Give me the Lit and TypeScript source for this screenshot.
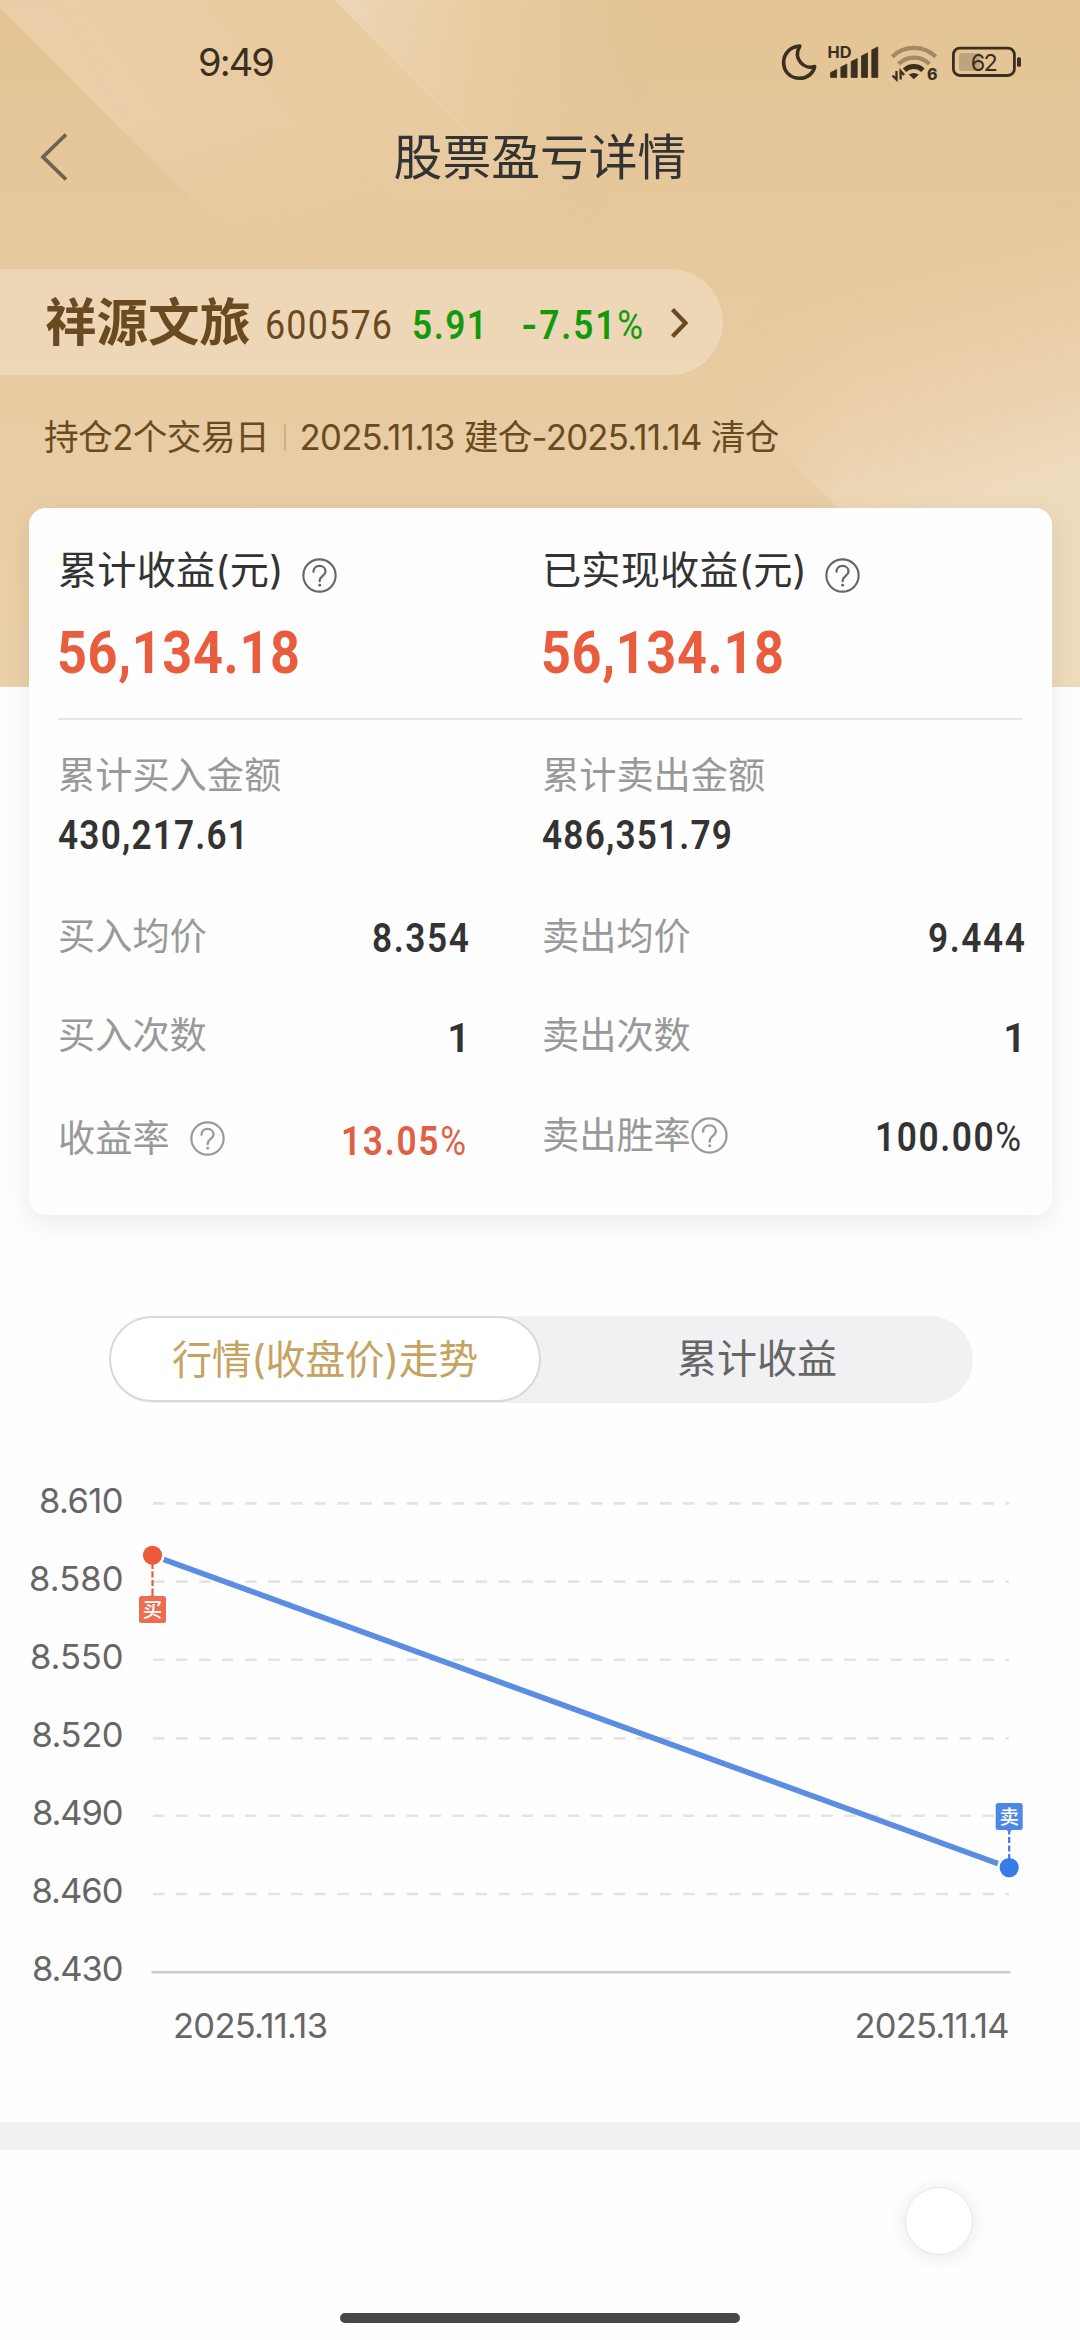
import { LitElement, html, svg, css } from "lit";
import { customElement, property } from "lit/decorators.js";

/* Condensed, slightly spaced figure that fills `w` pixels. */
@customElement("fit-num")
class FitNum extends LitElement {
  @property() text = "";
  @property({ type: Number }) w = 100;
  @property({ type: Number }) size = 40;
  @property({ type: Number }) lead = 2;
  @property({ type: Number }) tail = 2;
  static styles = css`
    :host { display: block; flex: none; }
    svg { display: block; overflow: visible; }
    text { font-family: Roboto, "Liberation Sans", sans-serif; fill: currentColor; }
    .thin { font-weight: 400; }
    .dash { font-family: Inter, sans-serif; }
  `;
  render() {
    const h = this.size;
    const k = 0.87;
    const len = (this.w + this.lead + this.tail) / k;
    const parts = this.text.match(/%|-|[^%-]+/g) ?? [];
    return html`<svg width=${this.w} height=${h} viewBox="0 0 ${this.w} ${h}">
      <text transform="scale(${k} 1)" x=${-this.lead / k} y=${h * 0.855} font-size=${this.size}
        textLength=${len} lengthAdjust="spacing">${parts.map((p) =>
          p === "%" ? svg`<tspan class="thin">%</tspan>` : p === "-" ? svg`<tspan class="dash">-</tspan>` : svg`<tspan>${p}</tspan>`)}</text>
    </svg>`;
  }
}

@customElement("help-icon")
class HelpIcon extends LitElement {
  @property({ type: Number }) size = 35;
  static styles = css`
    :host { display: block; flex: none; }
    svg { display: block; fill: none; stroke: currentColor; stroke-linecap: round; }
  `;
  render() {
    return html`<svg width=${this.size} height=${this.size} viewBox="0 0 36 36">
      <circle cx="18" cy="18" r="16.6" stroke-width="2.2"></circle>
      <path d="M11.8 14.2c0-3.6 2.6-6 6.2-6s6.2 2.3 6.2 5.6c0 4.4-6 4.8-6 9.4v.6" stroke-width="2.3"></path>
      <circle cx="18.2" cy="27.9" r="1.5" fill="currentColor" stroke="none"></circle>
    </svg>`;
  }
}

@customElement("status-bar")
class StatusBar extends LitElement {
  static styles = css`
    :host { display: flex; height: 124px; align-items: center; justify-content: space-between; padding: 0 58px 0 198px; color: #3b2f1f; }
    .time { font: 400 38px/44px Inter, sans-serif; letter-spacing: -1.9px; }
    svg { display: block; }
    .t { font-family: Inter, sans-serif; fill: #3b2f1f; }
  `;
  render() {
    const tops = [70, 64.5, 59, 53.3, 47.3];
    return html`<div class="time">9:49</div>
      <svg width="244" height="44" viewBox="778 40 244 44" fill="none">
        <path d="M799.8 46C789.500 46.500 783.600 54.600 783.600 62.500C783.600 72 791 78.300 799.500 78.300C807.500 78.300 813.300 73.500 814.700 66.500C804 70 792.500 59 799.800 46Z" stroke="#3b2f1f" stroke-width="3.600" stroke-linejoin="round"></path>
        <text class="t" x="827.500" y="58" font-size="15.800" font-weight="700" textLength="24" lengthAdjust="spacingAndGlyphs">HD</text>
        ${tops.map((y, i) => svg`<path d=${`M${830.6 + i * 10.300} 77.400V${y + 2.600}l6-3V77.400Z`} fill="#3b2f1f" stroke="#3b2f1f" stroke-width="0.800" stroke-linejoin="round"></path>`)}
        <g stroke-width="4.300">
          <path d="M892.200 56.800a31 31 0 0 1 43.500 0" stroke="#3b2f1f" stroke-opacity="0.400"></path>
          <path d="M898.500 64a22 22 0 0 1 31 0" stroke="#3b2f1f" stroke-opacity="0.400"></path>
          <path d="M904.500 70.300a13.200 13.200 0 0 1 18.500 0" stroke="#3b2f1f" stroke-width="4.800"></path>
        </g>
        <path d="M908.800 74.600q5-3.400 10 0l-5 4.600Z" fill="#3b2f1f"></path>
        <path d="M896.500 71v8.500l-4-4M900.600 79.500v-8.500l3.600 4" stroke="#3b2f1f" stroke-width="2.300"></path>
        <text class="t" x="927" y="79.800" font-size="15.800" font-weight="800">6</text>
        <rect x="953.400" y="48.200" width="61" height="27.300" rx="6.500" stroke="#3b2f1f" stroke-width="2.800"></rect>
        <path d="M962 53h18v18h-18a3 3 0 0 1-3-3V56a3 3 0 0 1 3-3Z" fill="#3b2f1f" fill-opacity="0.220"></path>
        <text class="t" x="983.500" y="70.600" font-size="23.500" text-anchor="middle" letter-spacing="-1.600">62</text>
        <rect x="1017" y="57.200" width="4" height="9.600" rx="1.500" fill="#3b2f1f"></rect>
      </svg>`;
  }
}

@customElement("price-chart")
class PriceChart extends LitElement {
  static styles = css`
    :host { display: block; }
    svg { display: block; }
    .lab { font: 400 34.500px Inter, sans-serif; fill: #666; }
    .tag { font: 500 19.500px "Noto Sans CJK SC", sans-serif; fill: #fff; text-anchor: middle; }
  `;
  ticks: [string, number, number][] = [
    ["8.610", 1503.4, 81], ["8.580", 1581.6, 91], ["8.550", 1659.800, 90], ["8.520", 1738.400, 88.500],
    ["8.490", 1815.800, 88], ["8.460", 1894, 88.500], ["8.430", 1972.200, 88],
  ];
  render() {
    return html`<svg width="1080" height="620" viewBox="0 1460 1080 620">
      ${this.ticks.map(([t, y, w], i) => svg`
        <text class="lab" x=${120 - w} y=${1512.800 + i * 78} textLength=${w + 3.500} lengthAdjust="spacing">${t}</text>
        ${i < 6 ? svg`<line x1="153" x2="1009" y1=${y} y2=${y} stroke="#e4e4e4" stroke-width="2.600" stroke-dasharray="11.500 11.540"></line>`
                : svg`<line x1="151.500" x2="1010.500" y1=${y} y2=${y} stroke="#ccc" stroke-width="2.600"></line>`}`)}
      <line x1="152.500" y1="1555.300" x2="1009" y2="1867.600" stroke="#5b8de2" stroke-width="5.600"></line>
      <circle cx="152.500" cy="1555.300" r="12" fill="#fefefe"></circle>
      <circle cx="1009.200" cy="1867.600" r="12" fill="#fefefe"></circle>
      <line x1="152.500" x2="152.500" y1="1563" y2="1594" stroke="#e65c41" stroke-width="2.200" stroke-dasharray="6 2.500"></line>
      <line x1="1009.200" x2="1009.200" y1="1860" y2="1830" stroke="#3f78d8" stroke-width="2.200" stroke-dasharray="6 2.500"></line>
      <circle cx="152.500" cy="1555.300" r="9.600" fill="#ed5a3b"></circle>
      <circle cx="1009.200" cy="1867.600" r="9.600" fill="#3a7bea"></circle>
      <path d="M149.500 1596.500l3-3 3 3Z" fill="#ea6b50"></path>
      <rect x="139" y="1596" width="27" height="27" rx="2.500" fill="#ee6d52"></rect>
      <text class="tag" x="152.500" y="1617">买</text>
      <path d="M1006.200 1829.500l3 3.500 3-3.500Z" fill="#4d86e6"></path>
      <rect x="995.700" y="1803" width="27" height="27" rx="2.500" fill="#4d86e6"></rect>
      <text class="tag" x="1009.200" y="1823.600">卖</text>
      <text class="lab" x="173" y="2038.400" textLength="155" lengthAdjust="spacing">2025.11.13</text>
      <text class="lab" x="854.600" y="2038.400" textLength="155" lengthAdjust="spacing">2025.11.14</text>
    </svg>`;
  }
}

@customElement("app-root")
class AppRoot extends LitElement {
  static styles = css`
    :host { display: block; }
    * { box-sizing: border-box; }
    .page { position: relative; display: flex; flex-direction: column; width: 1080px; height: 2340px; overflow: hidden; background: #fefefe; color: #333; font-family: Inter, "Noto Sans CJK SC", sans-serif; isolation: isolate; }
    .art { position: absolute; inset: 0 0 auto 0; z-index: -1; display: block; }
    .nav { display: grid; grid-template-columns: 108px 1fr 108px; height: 64px; align-items: center; }
    .nav svg { display: block; margin-left: 38px; }
    .title { padding-top: 2px; text-align: center; font-size: 48.800px; line-height: 64px; }
    .pill { display: flex; align-items: center; width: 723px; height: 106px; margin-top: 81px; padding-left: 45px; border-radius: 0 53px 53px 0; background: rgba(248, 234, 214, 0.420); color: #6a4a20; }
    .name { width: 222px; font-size: 51.500px; line-height: 106px; font-weight: 700; white-space: nowrap; }
    .pill fit-num { margin-top: 5px; }
    .green { color: #139a0c; font-weight: 600; }
    .pill .price { margin-left: 24px; }
    .pill .pct { margin-left: 42px; }
    .pill svg { margin: 2px 0 0 29px; }
    .sub { display: flex; align-items: center; height: 44px; margin-top: 40px; padding-left: 44px; font-size: 34.700px; line-height: 44px; color: #6a4a20; white-space: nowrap; }
    .days { width: 240px; letter-spacing: -0.600px; }
    .bar { width: 1.500px; height: 27px; background: #cfb184; }
    .range { margin-left: 14px; letter-spacing: -0.700px; }
    .card { width: 1023px; height: 707px; margin: 49px 0 0 29px; padding: 34px 29px 0; border-radius: 17px; background: #fefefe; box-shadow: 0 8px 30px rgba(0, 0, 0, 0.080); }
    .cols { display: grid; grid-template-columns: 484px 1fr; }
    .head { display: flex; align-items: center; height: 57px; padding-bottom: 7px; font-size: 39.200px; letter-spacing: 0.150px; white-space: nowrap; }
    .head help-icon { margin: 16px 0 0 18px; color: #666; }
    .big { margin-top: 23px; color: #ea5c3e; font-weight: 700; }
    .rule { height: 2px; margin-top: 36px; background: #e6e6e6; }
    .amount { margin-top: 31px; }
    .lab { font-size: 37.200px; line-height: 50px; color: #999; white-space: nowrap; }
    .val { color: #333; font-weight: 600; }
    .amount .val { margin-top: 13px; }
    .pair { display: flex; align-items: center; justify-content: space-between; height: 60px; }
    .pair:nth-child(odd) { width: 409px; }
    .pair .lab { display: flex; align-items: center; }
    .pair .val { margin-top: 2px; }
    .pair .red { margin: 3px 3px 0 0; }
    .pair .rate { margin-right: 4px; }
    .r1 { margin-top: 52px; }
    .r2 { margin-top: 39px; }
    .r3 { margin-top: 43px; }
    .r3 .pair:nth-child(2) { margin-top: -3px; }
    .gap { margin-left: 20px; }
    .one { font: 600 40px/60px Roboto, sans-serif; margin: 7px -3px 0 0; }
    .red { color: #df6044; font-weight: 600; }
    .tabs { display: grid; grid-template-columns: 1fr 1fr; width: 864px; height: 87px; margin: 101px 0 0 109px; border-radius: 44px; background: #f1f1f4; font-size: 40px; text-align: center; white-space: nowrap; }
    .tab { line-height: 86px; color: #666; }
    .on { height: 86px; border: 2px solid #d9d9d9; border-radius: 43px; background: #fff; color: #c5a362; line-height: 83px; letter-spacing: -0.350px; }
    price-chart { margin-top: 57px; }
    .band { height: 28px; margin-top: 42px; background: #f1f1f3; }
    .foot { display: flex; flex-direction: column; height: 190px; }
    .ball { width: 68px; height: 68px; margin: 37px 0 0 905px; border: 1.500px solid #e8e8e8; border-radius: 50%; background: #fff; box-shadow: 0 2px 18px rgba(60, 80, 110, 0.130); }
    .home { width: 400px; height: 10px; margin: 58px auto 0; border-radius: 5px; background: #474747; }
  `;
  render() {
    return html`<div class="page">
      <svg class="art" width="1080" height="687" viewBox="0 0 1080 687">
        <defs>
          <linearGradient id="base" x1="0" y1="0" x2="0" y2="1">
            <stop offset="0" stop-color="#e4c494"></stop><stop offset="0.500" stop-color="#e7caa0"></stop><stop offset="1" stop-color="#ebd1aa"></stop>
          </linearGradient>
          <linearGradient id="b1" gradientUnits="userSpaceOnUse" x1="100" y1="100" x2="290" y2="0">
            <stop offset="0" stop-color="#ebd0ad" stop-opacity="0.800"></stop><stop offset="1" stop-color="#eacda5" stop-opacity="0.700"></stop>
          </linearGradient>
          <linearGradient id="b2" gradientUnits="userSpaceOnUse" x1="350" y1="20" x2="640" y2="110">
            <stop offset="0" stop-color="#eed9ba" stop-opacity="0.850"></stop><stop offset="1" stop-color="#e9cba0" stop-opacity="0"></stop>
          </linearGradient>
          <linearGradient id="fade" x1="0" y1="0" x2="0" y2="1">
            <stop offset="0" stop-color="#fff"></stop><stop offset="0.450" stop-color="#fff"></stop><stop offset="1" stop-color="#000"></stop>
          </linearGradient>
          <mask id="m"><rect width="1080" height="265" fill="url(#fade)"></rect></mask>
          <linearGradient id="b3" gradientUnits="userSpaceOnUse" x1="880" y1="260" x2="960" y2="500">
            <stop offset="0" stop-color="#ebcda6" stop-opacity="0"></stop><stop offset="0.450" stop-color="#ecd0ad" stop-opacity="0.600"></stop><stop offset="1" stop-color="#eedbbc" stop-opacity="0.950"></stop>
          </linearGradient>
          <linearGradient id="b4" gradientUnits="userSpaceOnUse" x1="720" y1="420" x2="850" y2="440">
            <stop offset="0" stop-color="#000"></stop><stop offset="1" stop-color="#fff"></stop>
          </linearGradient>
          <mask id="m2"><rect x="600" y="200" width="480" height="487" fill="url(#b4)"></rect></mask>
        </defs>
        <rect width="1080" height="687" fill="url(#base)"></rect>
        <g mask="url(#m)">
          <path d="M0 8L252 260H600L334 0H0Z" fill="url(#b1)"></path>
          <path d="M334 0L594 260H800V0Z" fill="url(#b2)"></path>
        </g>
        <g mask="url(#m2)"><path d="M600 270L1017 687H1080V200H600Z" fill="url(#b3)"></path></g>
      </svg>
      <status-bar></status-bar>
      <div class="nav">
        <svg width="34" height="52" viewBox="0 0 34 52" fill="none" stroke="#6b6355" stroke-width="3.800"><path d="M28 3.500L5 26L28 48.500"></path></svg>
        <div class="title">股票盈亏详情</div>
      </div>
      <div class="pill">
        <div class="name">祥源文旅</div>
        <fit-num text="600576" w="123" size="41.300"></fit-num>
        <fit-num class="green price" text="5.91" w="67" size="40.500" tail="6"></fit-num>
        <fit-num class="green pct" text="-7.51%" w="118" size="40.500"></fit-num>
        <svg width="20" height="32" viewBox="0 0 20 32" fill="none" stroke="#6a4a20" stroke-width="4.200"><path d="M2.500 2.500L15.500 16L2.500 29.500"></path></svg>
      </div>
      <div class="sub"><div class="days">持仓2个交易日</div><div class="bar"></div><div class="range">2025.11.13 建仓-2025.11.14 清仓</div></div>
      <div class="card">
        <div class="cols">
          <div class="head">累计收益(元)<help-icon></help-icon></div>
          <div class="head">已实现收益(元)<help-icon></help-icon></div>
          <fit-num class="big" text="56,134.18" w="240" size="60" lead="1"></fit-num>
          <fit-num class="big" text="56,134.18" w="240" size="60" lead="1"></fit-num>
        </div>
        <div class="rule"></div>
        <div class="cols amount">
          <div class="lab">累计买入金额</div>
          <div class="lab">累计卖出金额</div>
          <fit-num class="val" text="430,217.61" w="184" size="40.500" lead="0" tail="6"></fit-num>
          <fit-num class="val" text="486,351.79" w="188" size="40.500" lead="0"></fit-num>
        </div>
        <div class="cols r1">
          <div class="pair"><div class="lab">买入均价</div><fit-num class="val" text="8.354" w="93" size="40.500"></fit-num></div>
          <div class="pair"><div class="lab">卖出均价</div><fit-num class="val" text="9.444" w="93" size="40.500"></fit-num></div>
        </div>
        <div class="cols r2">
          <div class="pair"><div class="lab">买入次数</div><div class="one">1</div></div>
          <div class="pair"><div class="lab">卖出次数</div><div class="one">1</div></div>
        </div>
        <div class="cols r3">
          <div class="pair"><div class="lab">收益率<help-icon class="gap"></help-icon></div><fit-num class="red" text="13.05%" w="120" size="40.500" lead="3"></fit-num></div>
          <div class="pair"><div class="lab">卖出胜率<help-icon size="37"></help-icon></div><fit-num class="val rate" text="100.00%" w="141" size="40.500" lead="3"></fit-num></div>
        </div>
      </div>
      <div class="tabs"><div class="tab on">行情(收盘价)走势</div><div class="tab">累计收益</div></div>
      <price-chart></price-chart>
      <div class="band"></div>
      <div class="foot"><div class="ball"></div><div class="home"></div></div>
    </div>`;
  }
}
